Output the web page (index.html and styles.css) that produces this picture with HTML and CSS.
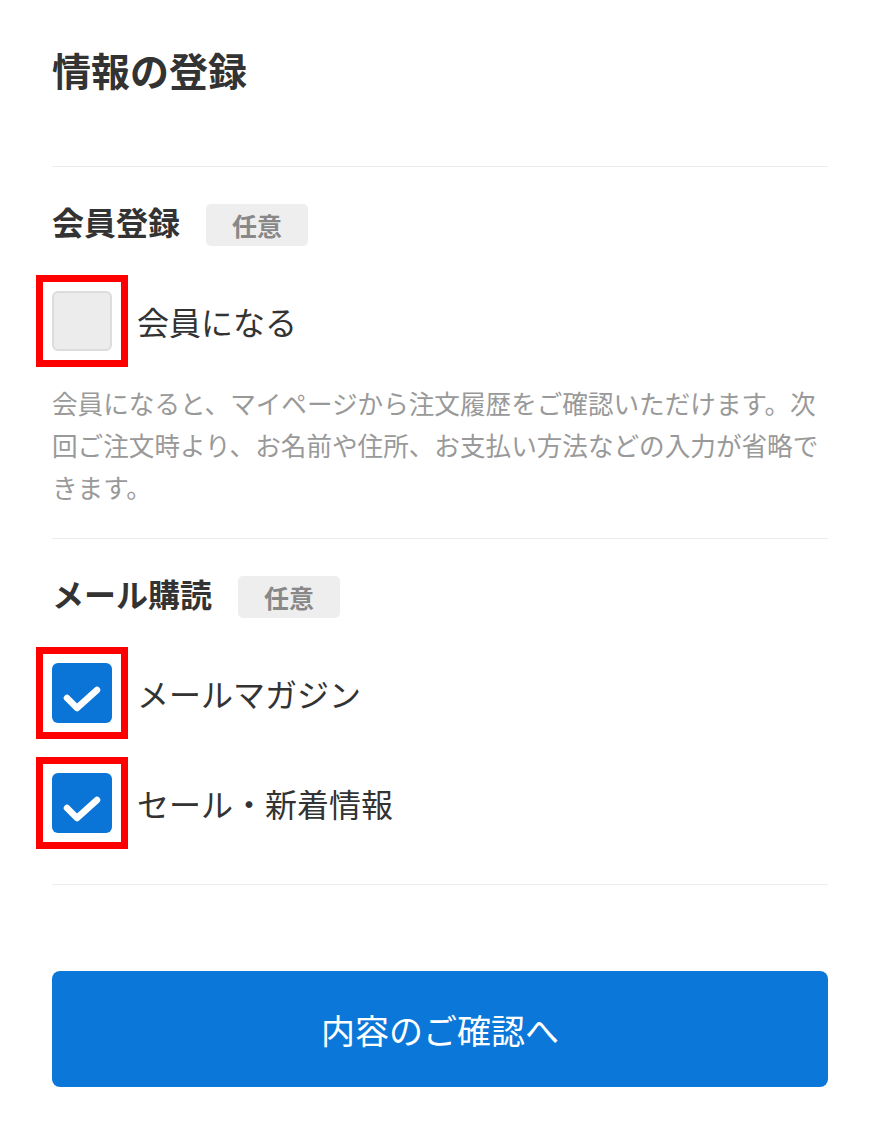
FILE: index.html
```html
<!DOCTYPE html>
<html lang="ja">
<head>
    <meta charset="UTF-8">
    <meta name="viewport" content="width=device-width, initial-scale=1.0">
    <title>情報の登録</title>
    <link rel="stylesheet" href="styles.css">
</head>
<body>
    <main class="regPage">
        <h1 class="title">情報の登録</h1>

        <section class="regBlock">
            <div class="blockHead">
                <h2>会員登録</h2>
                <span class="tag">任意</span>
            </div>
            <ul class="opts">
                <li class="opt">
                    <span class="box"></span>
                    <span class="optText">会員になる</span>
                </li>
            </ul>
            <p class="note">会員になると、マイページから注文履歴をご確認いただけます。次回ご注文時より、お名前や住所、お支払い方法などの入力が省略できます。</p>
        </section>

        <section class="regBlock last">
            <div class="blockHead">
                <h2>メール購読</h2>
                <span class="tag">任意</span>
            </div>
            <ul class="opts">
                <li class="opt">
                    <span class="box on">
                        <svg viewBox="0 0 60 60"><polyline points="15,35 25,45 45,27"/></svg>
                    </span>
                    <span class="optText">メールマガジン</span>
                </li>
                <li class="opt">
                    <span class="box on">
                        <svg viewBox="0 0 60 60"><polyline points="15,35 25,45 45,27"/></svg>
                    </span>
                    <span class="optText">セール・新着情報</span>
                </li>
            </ul>
        </section>

        <button class="nextBtn" type="button">内容のご確認へ</button>
    </main>
</body>
</html>
```

FILE: styles.css
```css
body,
h1,
h2,
p{
    margin: 0;
}
ul{
    margin: 0;
    padding: 0;
    list-style: none;
}
body{
    background: #fff;
    color: #333;
    font-family: "Noto Sans CJK JP", "Noto Sans", sans-serif;
}
.regPage{
    width: 776px;
    padding: 41px 50px 0 52px;
}
.title{
    font-size: 39px;
    font-weight: bold;
    line-height: 56px;
    margin-bottom: 69px;
}
.regBlock{
    border-top: 1px solid #ebebeb;
    padding: 37px 0 30px;
}
.regBlock.last{
    border-bottom: 1px solid #ebebeb;
    padding-bottom: 51px;
}
.blockHead{
    display: flex;
    align-items: center;
    gap: 26px;
}
.blockHead h2{
    font-size: 32px;
    font-weight: bold;
    line-height: 34px;
    margin-bottom: 8px;
}
.tag{
    display: inline-flex;
    align-items: center;
    justify-content: center;
    width: 102px;
    height: 42px;
    border-radius: 5px;
    background: #eee;
    color: #888;
    font-size: 25px;
    font-weight: bold;
}
.opts{
    margin-top: 45px;
    display: flex;
    flex-direction: column;
    gap: 50px;
}
.opt{
    display: flex;
    align-items: center;
    gap: 25px;
}
.box{
    position: relative;
    box-sizing: border-box;
    width: 60px;
    height: 60px;
    flex: none;
    border-radius: 6px;
    background: #ececec;
    border: 2px solid #dcdcdc;
}
/* red frame marked over each checkbox */
.box::after{
    content: "";
    position: absolute;
    top: -18px;
    left: -18px;
    right: -18px;
    bottom: -18px;
    border: 7px solid #ff0000;
}
.box.on{
    background: #0b74d7;
    border: none;
}
.box.on::after{
    top: -16px;
    left: -16px;
    right: -16px;
    bottom: -16px;
}
.box svg{
    display: block;
    width: 60px;
    height: 60px;
}
.box polyline{
    fill: none;
    stroke: #fff;
    stroke-width: 6.5;
    stroke-linecap: round;
    stroke-linejoin: round;
}
.optText{
    font-size: 32px;
    line-height: 40px;
}
.note{
    margin-top: 31px;
    font-size: 25.6px;
    line-height: 42px;
    color: #999;
}
.nextBtn{
    display: flex;
    align-items: center;
    justify-content: center;
    width: 776px;
    height: 116px;
    margin-top: 86px;
    border: none;
    border-radius: 8px;
    background: #0b78d9;
    color: #fff;
    font-family: "Noto Sans CJK JP", "Noto Sans", sans-serif;
    font-size: 34px;
}
```
